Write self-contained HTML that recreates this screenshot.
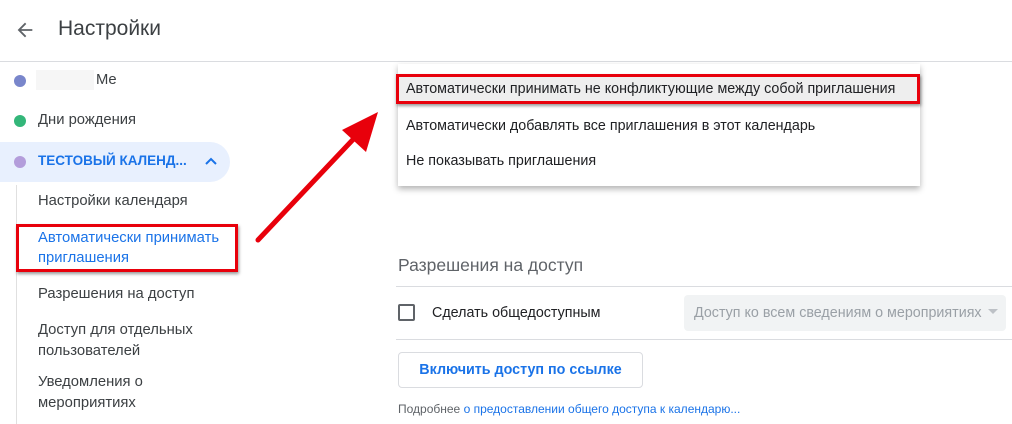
<!DOCTYPE html>
<html><head><meta charset="utf-8"><style>
*{margin:0;padding:0;box-sizing:border-box}
body{width:1012px;height:424px;background:#fff;font-family:"Liberation Sans",Arial,sans-serif;color:#3c4043;position:relative;overflow:hidden}
.a{position:absolute;white-space:nowrap}
.dot{position:absolute;width:12px;height:12px;border-radius:50%}
.s{font-size:14.8px}
.m{font-size:14.3px;color:#202124}
</style></head><body>
<svg class="a" style="left:14px;top:19px" width="22" height="22" viewBox="0 0 24 24"><path d="M20 11H7.8l5.6-5.6L12 4l-8 8 8 8 1.4-1.4L7.8 13H20z" fill="#5f6368"/></svg>
<div class="a" style="left:58px;top:17px;font-size:21px;color:#3c4043">Настройки</div>
<div class="a" style="left:0;top:61px;width:1012px;height:1px;background:#dadce0"></div>

<div class="dot" style="left:14px;top:75px;background:#7986cb"></div>
<div class="a" style="left:36px;top:70px;width:58px;height:20px;background:#f6f6f6"></div>
<div class="a s" style="left:96px;top:72px">Me</div>
<div class="dot" style="left:14px;top:115px;background:#33b679"></div>
<div class="a s" style="left:38px;top:112px">Дни рождения</div>
<div class="a" style="left:0;top:142px;width:230px;height:40px;background:#e8f0fe;border-radius:0 20px 20px 0"></div>
<div class="dot" style="left:14px;top:156px;background:#b39ddb"></div>
<div class="a" style="left:38px;top:153px;font-size:13.5px;font-weight:bold;color:#1a73e8">ТЕСТОВЫЙ КАЛЕНД...</div>
<svg class="a" style="left:204px;top:156px" width="14" height="10" viewBox="0 0 14 10"><path d="M2 8l5-5 5 5" stroke="#1a73e8" stroke-width="2" fill="none"/></svg>
<div class="a" style="left:16px;top:185px;width:1px;height:239px;background:#e0e0e0"></div>
<div class="a s" style="left:38px;top:193px">Настройки календаря</div>
<div class="a s" style="left:38px;top:228px;line-height:20px;color:#1a73e8">Автоматически принимать<br>приглашения</div>
<div class="a" style="left:16px;top:224px;width:222px;height:48px;border:3px solid #e8000b;box-shadow:1px 2px 3px rgba(0,0,0,.4)"></div>
<div class="a s" style="left:38px;top:286px">Разрешения на доступ</div>
<div class="a s" style="left:38px;top:320px;line-height:21px">Доступ для отдельных<br>пользователей</div>
<div class="a s" style="left:38px;top:372px;line-height:21px">Уведомления о<br>мероприятиях</div>

<svg class="a" style="left:250px;top:100px" width="140" height="150" viewBox="0 0 140 150"><line x1="8" y1="140" x2="112" y2="30" stroke="#e8000b" stroke-width="5" stroke-linecap="round"/><polygon points="128,12 92,30 116,52" fill="#e8000b"/></svg>

<div class="a" style="left:398px;top:64px;width:522px;height:122px;background:#fff;box-shadow:0 3px 6px rgba(0,0,0,.3)"></div>
<div class="a" style="left:396px;top:74px;width:524px;height:30px;background:#eeeeee;border:3px solid #e8000b;box-shadow:1px 2px 3px rgba(0,0,0,.4)"></div>
<div class="a m" style="left:406px;top:81px">Автоматически принимать не конфликтующие между собой приглашения</div>
<div class="a m" style="left:406px;top:118px">Автоматически добавлять все приглашения в этот календарь</div>
<div class="a m" style="left:406px;top:153px">Не показывать приглашения</div>

<div class="a" style="left:398px;top:255px;font-size:17.5px;color:#5f6368">Разрешения на доступ</div>
<div class="a" style="left:396px;top:286px;width:616px;height:1px;background:#dadce0"></div>
<div class="a" style="left:398px;top:304px;width:17px;height:17px;border:2px solid #5f6368;border-radius:2px"></div>
<div class="a" style="left:432px;top:305px;font-size:14.3px;color:#202124">Сделать общедоступным</div>
<div class="a" style="left:684px;top:295px;width:322px;height:36px;background:#f1f3f4;border-radius:4px"></div>
<div class="a" style="left:694px;top:305px;font-size:14.3px;color:#9aa0a6">Доступ ко всем сведениям о мероприятиях</div>
<svg class="a" style="left:988px;top:309px" width="10" height="6"><path d="M0 0h10L5 5z" fill="#bdc1c6"/></svg>
<div class="a" style="left:396px;top:339px;width:616px;height:1px;background:#dadce0"></div>
<div class="a" style="left:398px;top:352px;width:245px;height:36px;border:1px solid #dadce0;border-radius:4px"></div>
<div class="a" style="left:398px;top:362px;width:245px;text-align:center;font-size:14.3px;font-weight:bold;color:#1a73e8">Включить доступ по ссылке</div>
<div class="a" style="left:398px;top:402px;font-size:12px;color:#5f6368">Подробнее <span style="color:#1a73e8">о предоставлении общего доступа к календарю...</span></div>
</body></html>
